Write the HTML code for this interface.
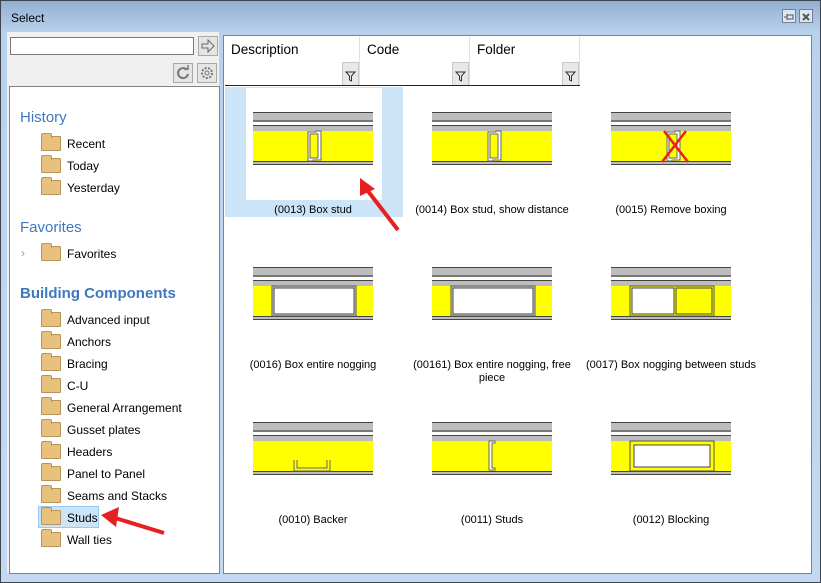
<!DOCTYPE html>
<html><head><meta charset="utf-8"><style>
*{margin:0;padding:0;box-sizing:border-box}
body{width:821px;height:583px;overflow:hidden;font-family:"Liberation Sans",sans-serif;background:#bcd3eb;position:relative}
.abs{position:absolute}
.win{left:0;top:0;width:821px;height:583px;border:1px solid #3c4650;background:linear-gradient(#93afd0,#b9d2ec 32px,#c3d9f1)}
.title{left:11px;top:11px;font-size:12px;color:#000}
.tb{width:14px;height:14px;border:1px solid #6f8193;background:#dbe7f4;top:9px}
.gray{left:7px;top:32px;width:212px;height:541px;background:#f0f0f0}
.panel{border:1px solid #838383;background:#fff}
.btn{border:1px solid #a8a8a8;background:#e5e5e5;width:20px;height:20px}
.hdr{top:37px;height:49px;border-right:1px solid #e0e0e0;font-size:13.5px;color:#000;padding:5px 0 0 7px}
.flt{width:17px;height:24px;border:1px solid #c8c8c8;background:#e8e8e8;bottom:0;right:0}
.sec{font-size:15px;color:#3d78c0;left:20px}
.it{left:41px;font-size:12px;color:#000}
.fold{display:inline-block;width:20px;height:15px;background:#e8c27c;border:1px solid #b8935a;border-radius:1px;vertical-align:-3px;margin-right:6px;position:relative}
.fold:before{content:"";position:absolute;left:-1px;top:-4px;width:9px;height:4px;background:#e8c27c;border:1px solid #b8935a;border-bottom:none;border-radius:2px 2px 0 0}
.lbl{font-size:11px;color:#000;text-align:center;width:178px;line-height:13px}
</style></head><body>
<div class="abs win"></div>
<div class="abs title">Select</div>
<div class="abs tb" style="left:782px"><svg width="12" height="12"><path d="M1 6H4M4 3V9M4 4H10V8H4" stroke="#555" fill="none"/></svg></div>
<div class="abs tb" style="left:799px"><svg width="12" height="12"><path d="M3 3L9 9M9 3L3 9" stroke="#555" stroke-width="2"/></svg></div>
<div class="abs gray"></div>
<div class="abs" style="left:10px;top:37px;width:184px;height:18px;border:1px solid #7a7a7a;background:#fff"></div>
<div class="abs btn" style="left:198px;top:36px"><svg width="18" height="18"><path d="M3 7H9V3L15 9L9 15V11H3Z" fill="none" stroke="#666"/></svg></div>
<div class="abs btn" style="left:173px;top:63px"><svg width="18" height="18"><path d="M13 6A5 5 0 1 0 14 10" fill="none" stroke="#777" stroke-width="2"/><path d="M10 5H14V1" fill="none" stroke="#777" stroke-width="1.5"/></svg></div>
<div class="abs btn" style="left:197px;top:63px"><svg width="18" height="18"><circle cx="9" cy="9" r="5" fill="none" stroke="#777" stroke-width="2" stroke-dasharray="2 1.5"/><circle cx="9" cy="9" r="2" fill="none" stroke="#777"/></svg></div>
<div class="abs panel" style="left:9px;top:86px;width:211px;height:488px"></div>
<div class="abs sec" style="top:109px">History</div>
<div class="abs it" style="top:136px"><span class="fold"></span>Recent</div>
<div class="abs it" style="top:158px"><span class="fold"></span>Today</div>
<div class="abs it" style="top:180px"><span class="fold"></span>Yesterday</div>
<div class="abs sec" style="top:219px">Favorites</div>
<div class="abs" style="left:21px;top:246px;font-size:12px;color:#999">›</div>
<div class="abs it" style="top:246px"><span class="fold"></span>Favorites</div>
<div class="abs sec" style="top:285px;font-weight:bold;font-size:15px">Building Components</div>
<div class="abs" style="left:38px;top:506px;width:61px;height:22px;background:#cce4f7;border:1px solid #99c9ef"></div>
<div class="abs it" style="top:312px"><span class="fold"></span>Advanced input</div>
<div class="abs it" style="top:334px"><span class="fold"></span>Anchors</div>
<div class="abs it" style="top:356px"><span class="fold"></span>Bracing</div>
<div class="abs it" style="top:378px"><span class="fold"></span>C-U</div>
<div class="abs it" style="top:400px"><span class="fold"></span>General Arrangement</div>
<div class="abs it" style="top:422px"><span class="fold"></span>Gusset plates</div>
<div class="abs it" style="top:444px"><span class="fold"></span>Headers</div>
<div class="abs it" style="top:466px"><span class="fold"></span>Panel to Panel</div>
<div class="abs it" style="top:488px"><span class="fold"></span>Seams and Stacks</div>
<div class="abs it" style="top:510px"><span class="fold"></span>Studs</div>
<div class="abs it" style="top:532px"><span class="fold"></span>Wall ties</div>
<div class="abs panel" style="left:223px;top:35px;width:589px;height:539px"></div>
<div class="abs hdr" style="left:224px;width:136px">Description<div class="abs flt"><svg width="15" height="22"><path d="M3 9H12L8.5 13V18L6.5 17V13Z" fill="none" stroke="#333"/></svg></div></div>
<div class="abs hdr" style="left:360px;width:110px">Code<div class="abs flt"><svg width="15" height="22"><path d="M3 9H12L8.5 13V18L6.5 17V13Z" fill="none" stroke="#333"/></svg></div></div>
<div class="abs hdr" style="left:470px;width:110px">Folder<div class="abs flt"><svg width="15" height="22"><path d="M3 9H12L8.5 13V18L6.5 17V13Z" fill="none" stroke="#333"/></svg></div></div>
<div class="abs" style="left:225px;top:85px;width:355px;height:1px;background:#222"></div>
<div class="abs" style="left:225px;top:87px;width:178px;height:130px;background:#cce4f7"></div>
<div class="abs" style="left:246px;top:88px;width:136px;height:112px;background:#fff"></div>

<svg class="abs" style="left:0;top:0" width="821" height="583">
<defs>
<g id="wall">
<rect x="0" y="0" width="120" height="10" fill="#bdbdbd"/><path d="M0 0.5H120" stroke="#444"/><path d="M0 9H120" stroke="#777" stroke-width="2"/>
<rect x="0" y="13" width="120" height="6" fill="#bdbdbd"/><path d="M0 13.5H120" stroke="#444"/>
<rect x="0" y="19" width="120" height="31" fill="#ffff00"/>
<rect x="0" y="49" width="120" height="3" fill="#bdbdbd"/><path d="M0 49.5H120M0 52.5H120" stroke="#444"/>
</g>
<g id="stud"><path d="M0 1H8V0H13V29H5V30H0Z" fill="#fff" stroke="#666"/><path d="M2 3H10V27H2Z" fill="#ff0" stroke="#666"/></g>
<g id="box"><rect x="19" y="19" width="84" height="30" fill="#d0d0d0" stroke="#555"/><rect x="21" y="21" width="80" height="26" fill="#fff" stroke="#444"/></g>
</defs>
<use href="#wall" x="253" y="112"/><use href="#stud" x="308" y="131"/>
<use href="#wall" x="432" y="112"/><use href="#stud" x="488" y="131"/>
<use href="#wall" x="611" y="112"/><use href="#stud" x="667" y="131"/>
<path d="M664 131L688 162M686 131L662 162" stroke="#e82020" stroke-width="2.5"/>
<use href="#wall" x="253" y="267"/><use href="#box" x="253" y="267"/>
<use href="#wall" x="432" y="267"/><use href="#box" x="432" y="267"/>
<use href="#wall" x="611" y="267"/>
<rect x="630" y="286" width="84" height="30" fill="#ff0" stroke="#555"/>
<rect x="632" y="288" width="42" height="26" fill="#fff" stroke="#444"/><rect x="676" y="288" width="36" height="26" fill="#ff0" stroke="#444"/>
<use href="#wall" x="253" y="422"/>
<path d="M294 460V471H330V460M297 460V468H327V460" fill="none" stroke="#666"/>
<use href="#wall" x="432" y="422"/><path d="M489 441H495V443H492V468H495V470H489Z" fill="#fff" stroke="#666"/>
<use href="#wall" x="611" y="422"/>
<rect x="630" y="441" width="84" height="30" fill="#ff0" stroke="#555"/><rect x="634" y="445" width="76" height="22" fill="#fff" stroke="#444"/>
<path d="M398 230L364 186" stroke="#e62020" stroke-width="4"/><polygon points="360,178 375,189 360,196" fill="#e62020"/>
<path d="M164 533L112 517" stroke="#e62020" stroke-width="4"/><polygon points="101,515 119,507 116,527" fill="#e62020"/>
</svg>
<div class="abs lbl" style="left:224px;top:204px">(0013) Box stud</div>
<div class="abs lbl" style="left:403px;top:204px">(0014) Box stud, show distance</div>
<div class="abs lbl" style="left:582px;top:204px">(0015) Remove boxing</div>
<div class="abs lbl" style="left:224px;top:359px">(0016) Box entire nogging</div>
<div class="abs lbl" style="left:403px;top:359px">(00161) Box entire nogging, free piece</div>
<div class="abs lbl" style="left:582px;top:359px">(0017) Box nogging between studs</div>
<div class="abs lbl" style="left:224px;top:514px">(0010) Backer</div>
<div class="abs lbl" style="left:403px;top:514px">(0011) Studs</div>
<div class="abs lbl" style="left:582px;top:514px">(0012) Blocking</div>
</body></html>
